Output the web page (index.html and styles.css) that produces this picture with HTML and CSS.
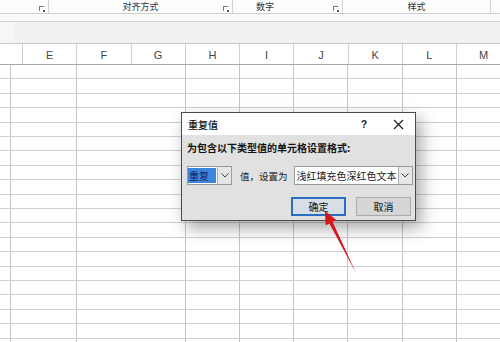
FILE: index.html
```html
<!DOCTYPE html>
<html lang="zh-CN">
<head>
    <meta charset="UTF-8">
    <title>重复值</title>
    <link rel="stylesheet" href="styles.css">
</head>
<body>
    <div class="ribbon">
        <div class="group g-first"><span class="launcher"></span></div>
        <div class="group g-align"><span class="group-name">对齐方式</span><span class="launcher"></span></div>
        <div class="group g-number"><span class="group-name">数字</span><span class="launcher"></span></div>
        <div class="group g-style"><span class="group-name">样式</span></div>
        <div class="group g-rest"></div>
    </div>
    <div class="strip"></div>
    <div class="formula-bar"><div class="name-box"></div></div>

    <div class="col-headers">
        <div class="col-head first"></div>
        <div class="col-head">E</div>
        <div class="col-head">F</div>
        <div class="col-head">G</div>
        <div class="col-head">H</div>
        <div class="col-head">I</div>
        <div class="col-head">J</div>
        <div class="col-head">K</div>
        <div class="col-head">L</div>
        <div class="col-head">M</div>
    </div>
    <div class="sheet"></div>

    <!-- conditional formatting dialog -->
    <div class="dialog">
        <div class="dialog-title">
            <span class="title-text">重复值</span>
            <span class="title-help">?</span>
            <span class="title-close">
                <svg width="11" height="11" viewBox="0 0 11 11"><path d="M1 1L10 10M10 1L1 10" stroke="#222" stroke-width="1.3" fill="none"/></svg>
            </span>
        </div>
        <div class="dialog-body">
            <div class="prompt">为包含以下类型值的单元格设置格式:</div>
            <div class="combo-row">
                <div class="combo combo-small">
                    <span class="combo-value selected">重复</span>
                    <span class="combo-btn"><svg width="8" height="5" viewBox="0 0 8 5"><path d="M0.5 0.5L4 4L7.5 0.5" stroke="#444" fill="none"/></svg></span>
                </div>
                <span class="combo-label">值，设置为</span>
                <div class="combo combo-wide">
                    <span class="combo-value">浅红填充色深红色文本</span>
                    <span class="combo-btn"><svg width="8" height="5" viewBox="0 0 8 5"><path d="M0.5 0.5L4 4L7.5 0.5" stroke="#444" fill="none"/></svg></span>
                </div>
            </div>
            <div class="buttons">
                <button class="btn btn-default">确定</button>
                <button class="btn">取消</button>
            </div>
        </div>
    </div>

    <svg class="arrow" width="500" height="342" viewBox="0 0 500 342">
        <path d="M325 211L336.4 219.9L332.6 221.8L356 273L329.4 223.4L325.6 225.3Z" fill="#d4161c"/>
    </svg>
</body>
</html>
```

FILE: styles.css
```css
body {
    margin: 0;
    width: 500px;
    height: 342px;
    overflow: hidden;
    position: relative;
    background: #ffffff;
    font-family: "Liberation Sans", "Noto Sans CJK SC", sans-serif;
    color: #222;
}

/* ribbon group labels */
.ribbon {
    display: flex;
    height: 13px;
    border-bottom: 1px solid #cfcfcf;
    background: #fdfdfd;
}
.group {
    position: relative;
    border-right: 1px solid #d4d4d4;
    display: flex;
    align-items: center;
    justify-content: center;
    font-family: "Noto Sans CJK SC", sans-serif;
    font-size: 9px;
    color: #333;
    line-height: 13px;
}
.g-first { width: 48px; }
.g-align { width: 183px; }
.g-number { width: 110px; justify-content: flex-start; padding-left: 23px; box-sizing: border-box; }
.g-style { width: 147px; }
.g-rest { flex: 1; border-right: none; }
.launcher {
    position: absolute;
    right: 4px;
    bottom: 2px;
    width: 4px;
    height: 4px;
    border-left: 1px solid #777;
    border-top: 1px solid #777;
}
.launcher::after {
    content: "";
    position: absolute;
    right: -1px;
    bottom: -1px;
    width: 2px;
    height: 2px;
    background: #555;
}

.strip {
    height: 7px;
    border-bottom: 1px solid #d0d0d0;
    background: #fafafa;
}
.formula-bar {
    height: 21px;
    background: #f1f1f1;
    border-bottom: 1px solid #c6c6c6;
}
.name-box {
    width: 15px;
    height: 100%;
    background: #f6f6f6;
}

/* column headers */
.col-headers {
    display: flex;
    height: 20px;
    border-bottom: 1px solid #a8a8a8;
    background: #ffffff;
}
.col-head {
    width: 54.25px;
    flex: none;
    border-right: 1px solid #d0d0d0;
    box-sizing: border-box;
    text-align: center;
    font-size: 11px;
    line-height: 22px;
    color: #444;
}
.col-head.first {
    width: 23px;
}

/* cell grid */
.sheet {
    height: 280px;
    background-image:
        repeating-linear-gradient(to bottom, transparent 0, transparent 13.4px, #cfcfcf 13.4px, #cfcfcf 14.4px),
        repeating-linear-gradient(to right, transparent 0, transparent 53.25px, #c4c4c4 53.25px, #c4c4c4 54.25px);
    background-position: 0 0, 23px 0;
    background-size: 100% 100%, 100% 100%;
}

/* dialog */
.dialog {
    position: absolute;
    left: 181px;
    top: 112px;
    width: 235px;
    height: 109px;
    box-sizing: border-box;
    border: 1px solid #4a4a4a;
    background: #e1e1e1;
    box-shadow: 5px 7px 16px rgba(0, 0, 0, 0.35);
    font-family: "Noto Sans CJK SC", sans-serif;
    font-size: 10px;
    display: flex;
    flex-direction: column;
}
.dialog-title {
    height: 22px;
    background: #ffffff;
    display: flex;
    align-items: center;
    padding-left: 6px;
    flex: none;
}
.title-text {
    flex: 1;
    font-size: 10px;
    font-weight: 500;
    color: #111;
}
.title-help {
    font-family: "Liberation Sans", sans-serif;
    font-weight: bold;
    font-size: 10px;
    width: 34px;
    text-align: center;
}
.title-close {
    width: 34px;
    display: flex;
    justify-content: center;
}
.dialog-body {
    padding: 5px 4px 0 5px;
}
.prompt {
    font-weight: bold;
    font-size: 10px;
    color: #111;
    line-height: 16px;
}
.combo-row {
    display: flex;
    align-items: center;
    margin-top: 10px;
    height: 19px;
}
.combo {
    display: flex;
    flex: none;
    height: 19px;
    box-sizing: border-box;
    border: 1px solid #9a9a9a;
    background: #ffffff;
}
.combo-small { width: 45px; }
.combo-wide { width: 119px; }
.combo-value {
    flex: 1;
    line-height: 17px;
    padding-left: 2px;
    font-size: 10px;
    white-space: nowrap;
    overflow: hidden;
}
.combo-value.selected {
    background: #3d86de;
    color: #15205a;
    margin: 1px 1px 1px 0;
    line-height: 15px;
    padding-left: 1px;
}
.combo-btn {
    width: 13px;
    flex: none;
    border-left: 1px solid #b0b0b0;
    background: #e6e6e6;
    display: flex;
    align-items: center;
    justify-content: center;
}
.combo-label {
    margin: 0 6px 0 8px;
    font-size: 9.5px;
    color: #222;
    white-space: nowrap;
}
.buttons {
    display: flex;
    justify-content: flex-end;
    gap: 10px;
    margin-top: 12px;
}
.btn {
    width: 55px;
    height: 19px;
    box-sizing: border-box;
    border: 1px solid #aaaaaa;
    background: #d6d6d6;
    font-family: "Noto Sans CJK SC", sans-serif;
    font-size: 10px;
    color: #111;
    padding: 0;
}
.btn-default {
    border: 2px solid #2b6cc4;
    background: #d7dee6;
}

.arrow {
    position: absolute;
    left: 0;
    top: 0;
}
```
